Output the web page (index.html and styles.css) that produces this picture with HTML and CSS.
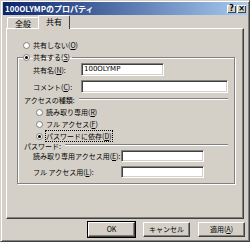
FILE: index.html
```html
<!DOCTYPE html>
<html lang="ja">

<head>
    <meta charset="UTF-8">
    <title>100OLYMPのプロパティ</title>
    <link rel="stylesheet" href="styles.css">
</head>

<body>
    <div class="window">
        <!-- Title bar -->
        <div class="title-bar">
            <span class="title-text">100OLYMPのプロパティ</span>
            <div class="title-buttons">
                <span class="title-btn">?</span>
                <span class="title-btn">×</span>
            </div>
        </div>

        <!-- Tabs -->
        <div class="tabs">
            <span class="tab">全般</span>
            <span class="tab active">共有</span>
        </div>

        <div class="panel">
            <label class="radio-row top-radio"><span class="radio"></span>共有しない(<u>O</u>)</label>

            <fieldset class="group">
                <legend><span class="radio checked"></span>共有する(<u>S</u>)</legend>

                <div class="field-row">
                    <span class="field-label">共有名(<u>N</u>):</span>
                    <span class="textbox short">100OLYMP</span>
                </div>
                <div class="field-row">
                    <span class="field-label">コメント(<u>C</u>):</span>
                    <span class="textbox wide"></span>
                </div>

                <div class="section-head">アクセスの種類:</div>
                <label class="radio-row sub"><span class="radio"></span>読み取り専用(<u>R</u>)</label>
                <label class="radio-row sub"><span class="radio"></span>フル アクセス(<u>F</u>)</label>
                <label class="radio-row sub"><span class="radio checked"></span><span class="focus">パスワードに依存(<u>D</u>)</span></label>

                <div class="section-head pw-head">パスワード:</div>
                <div class="field-row pw first">
                    <span class="field-label long">読み取り専用アクセス用(<u>E</u>):</span>
                    <span class="textbox pw-box"></span>
                </div>
                <div class="field-row pw">
                    <span class="field-label long">フル アクセス用(<u>L</u>):</span>
                    <span class="textbox pw-box"></span>
                </div>
            </fieldset>
        </div>

        <!-- Buttons -->
        <div class="button-group">
            <button class="btn default">OK</button>
            <button class="btn">キャンセル</button>
            <button class="btn">適用(<u>A</u>)</button>
        </div>
    </div>
</body>

</html>
```

FILE: styles.css
```css
body {
    margin: 0;
    padding: 0;
    font-family: "Noto Sans CJK JP", "DejaVu Sans", sans-serif;
    font-size: 7px;
    color: #000;
    white-space: nowrap;
}

u {
    text-underline-offset: 1px;
}

.window {
    width: 250px;
    height: 242px;
    box-sizing: border-box;
    background-color: #d4d0c8;
    border: 1px solid;
    border-color: #d4d0c8 #404040 #404040 #d4d0c8;
    box-shadow: inset 1px 1px 0 #fff, inset -1px -1px 0 #808080;
    padding: 1px 2px 0 2px;
    display: flex;
    flex-direction: column;
}

/* title bar */
.title-bar {
    height: 13px;
    background: linear-gradient(to right, #0a246a, #a6caf0);
    display: flex;
    align-items: center;
    justify-content: space-between;
    padding: 0 1px 0 2px;
}

.title-text {
    color: #fff;
    font-weight: bold;
    font-size: 8px;
    line-height: 13px;
}

.title-buttons {
    display: flex;
}

.title-btn {
    width: 9px;
    height: 8px;
    background-color: #d4d0c8;
    box-shadow: inset 1px 1px 0 #fff, inset -1px -1px 0 #404040;
    font-size: 8px;
    line-height: 8px;
    font-weight: bold;
    text-align: center;
    font-family: "DejaVu Sans", sans-serif;
}

.title-btn:last-child {
    margin-left: 1px;
}

/* tabs */
.tabs {
    display: flex;
    align-items: flex-end;
    height: 13px;
    padding-left: 4px;
    margin-top: 1px;
    position: relative;
    z-index: 1;
}

.tab {
    height: 11px;
    line-height: 11px;
    padding: 0 7px;
    border: 1px solid;
    border-color: #fff #404040 transparent #fff;
    border-bottom: none;
    border-radius: 2px 2px 0 0;
    font-size: 8px;
}

.tab.active {
    height: 13px;
    line-height: 12px;
    background-color: #d4d0c8;
    padding: 0 7px;
    margin-left: -1px;
}

/* panel */
.panel {
    margin: -1px 3px 0 3px;
    height: 191px;
    box-sizing: border-box;
    border: 1px solid;
    border-color: #fff #404040 #404040 #fff;
    box-shadow: inset -1px -1px 0 #808080;
    padding: 10px 8px 0 10px;
}

.radio-row {
    display: flex;
    align-items: center;
    height: 12px;
}

.radio {
    width: 7px;
    height: 7px;
    border-radius: 50%;
    background-color: #fff;
    border: 1px solid #808080;
    box-sizing: border-box;
    margin-right: 3px;
    display: inline-flex;
    align-items: center;
    justify-content: center;
    flex-shrink: 0;
}

.radio.checked::after {
    content: "";
    width: 3px;
    height: 3px;
    border-radius: 50%;
    background-color: #000;
}

.top-radio {
    margin-left: 6px;
}

.group {
    margin: 0;
    padding: 0 6px 5px 6px;
    border: 1px solid #808080;
    box-shadow: inset 1px 1px 0 #fff, 1px 1px 0 #fff;
    box-sizing: border-box;
}

.group legend {
    display: flex;
    align-items: center;
    padding: 0 2px 0 0;
    margin-left: -1px;
    height: 12px;
}

.field-row {
    display: flex;
    align-items: center;
    height: 13px;
    margin-top: 4px;
    padding-left: 9px;
}

.field-row:first-of-type {
    margin-top: 0;
}

.field-label {
    width: 48px;
}

.field-label.long {
    width: 88px;
}

.textbox {
    height: 13px;
    box-sizing: border-box;
    background-color: #fff;
    border: 1px solid;
    border-color: #808080 #fff #fff #808080;
    box-shadow: inset 1px 1px 0 #404040, inset -1px -1px 0 #d4d0c8;
    line-height: 11px;
    padding-left: 2px;
    font-family: "DejaVu Sans", sans-serif;
    font-size: 7px;
}

.textbox.short {
    width: 83px;
}

.textbox.wide {
    width: 147px;
}

.textbox.pw-box {
    width: 83px;
    height: 12px;
}

.field-row.pw {
    height: 12px;
    margin-top: 4px;
}

.field-row.pw.first {
    margin-top: -2px;
}

.section-head {
    display: flex;
    align-items: center;
    height: 12px;
    margin-top: 1px;
}

.section-head.pw-head {
    margin-top: -2px;
}

.section-head::after {
    content: "";
    flex: 1;
    height: 0;
    border-top: 1px solid #808080;
    border-bottom: 1px solid #fff;
    margin: 0 0 2px 4px;
}

.sub {
    padding-left: 12px;
    height: 12px;
}

.focus {
    outline: 1px dotted #000;
    outline-offset: 0;
}

/* buttons */
.button-group {
    display: flex;
    justify-content: flex-end;
    gap: 8px;
    padding: 3px 2px 0 0;
}

.btn {
    width: 47px;
    height: 15px;
    padding: 0;
    font-family: inherit;
    font-size: 7px;
    line-height: 11px;
    background-color: #d4d0c8;
    border: 1px solid;
    border-color: #fff #404040 #404040 #fff;
    box-shadow: inset -1px -1px 0 #808080;
    border-radius: 0;
}

.btn.default {
    outline: 1px solid #000;
}
```
